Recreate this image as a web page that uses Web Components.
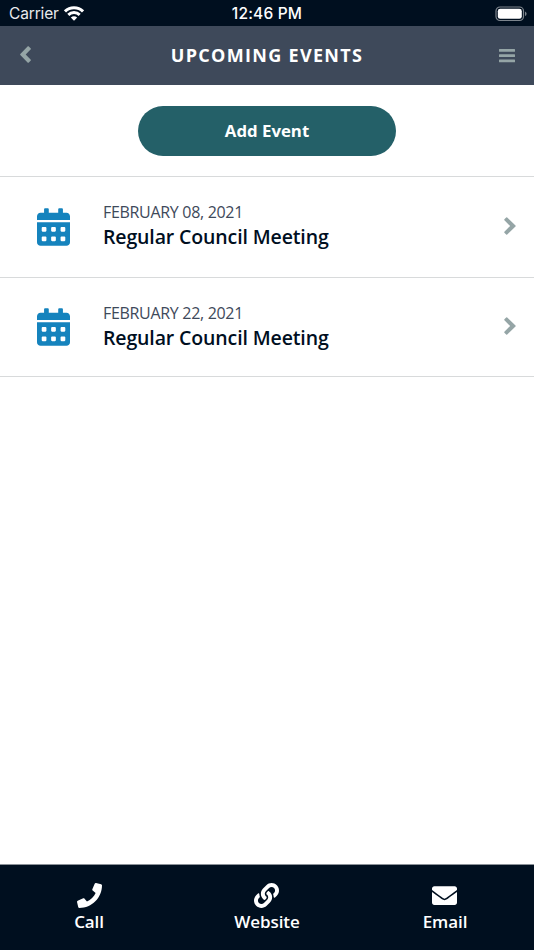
<!DOCTYPE html>
<html lang="en">
<head>
<meta charset="utf-8">
<title>Upcoming Events</title>
<style>
  body {
    margin: 0;
    background: #fff;
    font-family: "Open Sans", "Noto Sans", sans-serif;
    color: #000f1f;
  }
  event-row:last-of-type {
    --row-height: 98px;
    --text-drop: 2px;
  }
</style>
</head>
<body>
<events-app>
  <status-bar slot="top" carrier="Carrier">12:46 PM</status-bar>
  <nav-header slot="top">UPCOMING EVENTS</nav-header>
  <add-button>Add Event</add-button>
  <event-row date="FEBRUARY 08, 2021">Regular Council Meeting</event-row>
  <event-row date="FEBRUARY 22, 2021">Regular Council Meeting</event-row>
  <tab-item slot="tabs" icon="phone">Call</tab-item>
  <tab-item slot="tabs" icon="link">Website</tab-item>
  <tab-item slot="tabs" icon="envelope">Email</tab-item>
</events-app>

<script>
const ICONS = {
  phone: ["0 0 512 512", "M493.4 24.6l-104-24c-11.3-2.6-22.9 3.3-27.5 13.9l-48 112c-4.2 9.8-1.4 21.3 6.9 28l60.6 49.6c-36 76.7-98.9 140.5-177.2 177.2l-49.6-60.6c-6.8-8.3-18.2-11.1-28-6.9l-112 48C3.9 366.5-2 378.1.6 389.4l24 104C27.1 504.2 36.7 512 48 512c256.1 0 464-207.5 464-464 0-11.2-7.7-20.9-18.6-23.4z"],
  link: ["0 0 512 512", "M326.612 185.391c59.747 59.809 58.927 155.698.36 214.59-.11.12-.24.25-.36.37l-67.2 67.2c-59.27 59.27-155.699 59.262-214.96 0-59.27-59.26-59.27-155.7 0-214.96l37.106-37.106c9.84-9.84 26.786-3.3 27.294 10.606.648 17.722 3.826 35.527 9.69 52.721 1.986 5.822.567 12.262-3.783 16.612l-13.087 13.087c-28.026 28.026-28.905 73.66-1.155 101.96 28.024 28.579 74.086 28.749 102.325.51l67.2-67.19c28.191-28.191 28.073-73.757 0-101.83-3.701-3.694-7.429-6.564-10.341-8.569a16.037 16.037 0 0 1-6.947-12.606c-.396-10.567 3.348-21.456 11.698-29.806l21.054-21.055c5.521-5.521 14.182-6.199 20.584-1.731a152.482 152.482 0 0 1 20.522 17.197zM467.547 44.449c-59.261-59.262-155.69-59.27-214.96 0l-67.2 67.2c-.12.12-.25.25-.36.37-58.566 58.892-59.387 154.781.36 214.59a152.454 152.454 0 0 0 20.521 17.196c6.402 4.468 15.064 3.789 20.584-1.731l21.054-21.055c8.35-8.35 12.094-19.239 11.698-29.806a16.037 16.037 0 0 0-6.947-12.606c-2.912-2.005-6.64-4.875-10.341-8.569-28.073-28.073-28.191-73.639 0-101.83l67.2-67.19c28.239-28.239 74.3-28.069 102.325.51 27.75 28.3 26.872 73.934-1.155 101.96l-13.087 13.087c-4.35 4.35-5.769 10.79-3.783 16.612 5.864 17.194 9.042 34.999 9.69 52.721.509 13.906 17.454 20.446 27.294 10.606l37.106-37.106c59.271-59.259 59.271-155.699.001-214.959z"],
  envelope: ["0 0 512 512", "M502.3 190.8c3.9-3.1 9.7-.2 9.7 4.7V400c0 26.5-21.5 48-48 48H48c-26.5 0-48-21.5-48-48V195.6c0-5 5.7-7.8 9.7-4.7 22.4 17.4 52.1 39.5 154.1 113.6 21.1 15.4 56.7 47.8 92.2 47.6 35.7.3 72-32.8 92.3-47.6 102-74.1 131.6-96.3 154-113.7zM256 320c23.2.4 56.6-29.2 73.4-41.4 132.7-96.3 142.8-104.7 173.4-128.7 5.8-4.5 9.2-11.5 9.2-18.9v-19c0-26.5-21.5-48-48-48H48c-26.5 0-48 21.5-48 48v19c0 7.4 3.4 14.3 9.2 18.9 30.6 23.9 40.7 32.4 173.4 128.7 16.8 12.2 50.2 41.8 73.4 41.4z"],
  calendar: ["0 0 448 512", "M0 464c0 26.5 21.5 48 48 48h352c26.5 0 48-21.5 48-48V192H0v272z" +
    [[320, 268], [320, 396], [192, 268], [192, 396], [64, 268], [64, 396]].map(([x, y]) =>
      `M${x} ${y}c0-6.6 5.4-12 12-12h40c6.6 0 12 5.4 12 12v40c0 6.6-5.4 12-12 12h-40c-6.6 0-12-5.4-12-12v-40z`).join("") +
    "M400 64h-48V16c0-8.8-7.2-16-16-16h-32c-8.8 0-16 7.2-16 16v48H160V16c0-8.8-7.2-16-16-16h-32c-8.8 0-16 7.2-16 16v48H48C21.5 64 0 85.5 0 112v48h448v-48c0-26.5-21.5-48-48-48z"],
  back: ["0 0 11 17", "M7.8.3Q8.2 0 8.6.3L10.8 2.500Q11.1 2.900 10.8 3.300L5.700 8.5 10.8 13.700Q11.1 14.1 10.8 14.500L8.600 16.7Q8.2 17 7.8 16.7L.3 8.9Q0 8.5 .3 8.1z"],
  forward: ["0 0 12 18", "M3.2.4Q2.7 0 2.2.4L.4 2.2Q0 2.7.4 3.2L6.1 9 .4 14.8Q0 15.3.4 15.8L2.2 17.6Q2.7 18 3.2 17.6L11.5 9.5Q12 9 11.5 8.5z"],
  menu: ["0 0 16 14", "M.5 0h15q.5 0 .5.5v1.8q0 .5-.5.5H.5q-.5 0-.5-.5V.5Q0 0 .5 0zM.5 5.2h15q.5 0 .5.5v1.8q0 .5-.5.5H.5Q0 8 0 7.500V5.7q0-.5.5-.5zM.5 10.400h15q.5 0 .5.5v1.8q0 .5-.5.5H.5q-.5 0-.5-.5v-1.8q0-.5.5-.5z"]
};

class AppIcon extends HTMLElement {
  constructor() {
    super();
    this.attachShadow({ mode: "open" });
  }
  connectedCallback() {
    const [box, path] = ICONS[this.getAttribute("name")];
    this.shadowRoot.innerHTML = `
      <style>
        :host { display: block; flex: none; }
        svg { display: block; width: 100%; height: 100%; fill: currentColor; }
      </style>
      <svg viewBox="${box}"><path fill-rule="evenodd" d="${path}"/></svg>
    `;
  }
}

class EventsApp extends HTMLElement {
  constructor() {
    super();
    this.attachShadow({ mode: "open" });
    this.shadowRoot.innerHTML = `
      <style>
        :host { display: flex; flex-direction: column; height: 950px; }
        main { flex: 1; }
        footer {
          display: grid;
          grid-template-columns: repeat(3, 1fr);
          height: 85px;
          background: #000f1f;
          border-top: 1px solid #8b9198;
          box-sizing: content-box;
        }
      </style>
      <slot name="top"></slot>
      <main><slot></slot></main>
      <footer><slot name="tabs"></slot></footer>
    `;
  }
}

class StatusBar extends HTMLElement {
  constructor() {
    super();
    this.attachShadow({ mode: "open" });
  }
  connectedCallback() {
    this.shadowRoot.innerHTML = `
      <style>
        :host {
          display: grid;
          grid-template-columns: 1fr auto 1fr;
          align-items: center;
          height: 26px;
          box-sizing: border-box;
          padding: 1px 7px 0 9px;
          background: #000f1f;
          color: #fff;
          font: 15.5px/24px Inter, sans-serif;
        }
        .left { display: flex; align-items: center; gap: 5px; }
        .carrier { letter-spacing: -0.15px; color: #e9ebed; }
        .time { font-weight: 500; letter-spacing: 0.2px; margin-right: 2px; }
        .battery { justify-self: end; }
        svg { display: block; }
      </style>
      <div class="left">
        <span class="carrier">${this.getAttribute("carrier")}</span>
        <svg width="20" height="15" viewBox="0 0 20 15" fill="none" stroke="#fff" stroke-width="2.9">
          <path d="M1 5.400A12.800 12.800 0 0 1 19 5.400"/>
          <path d="M4.300 8.900A8.100 8.100 0 0 1 15.700 8.900"/>
          <path d="M10 14.800L6.800 11.600Q10 8.900 13.200 11.600z" fill="#fff" stroke="none"/>
        </svg>
      </div>
      <span class="time"><slot></slot></span>
      <svg class="battery" width="32" height="16" viewBox="0 0 32 16">
        <rect x="1" y="1" width="27.500" height="13.500" rx="4" fill="none" stroke="#7c848c" stroke-width="1.200"/>
        <rect x="2.800" y="2.800" width="24" height="10" rx="2.400" fill="#fff"/>
        <path d="M30 5.500q1.600.7 1.600 2.300t-1.600 2.300z" fill="#7c848c"/>
      </svg>
    `;
  }
}

class NavHeader extends HTMLElement {
  constructor() {
    super();
    this.attachShadow({ mode: "open" });
    this.shadowRoot.innerHTML = `
      <style>
        :host {
          display: grid;
          grid-template-columns: 1fr auto 1fr;
          align-items: center;
          height: 59px;
          box-sizing: border-box;
          padding: 0 19px 0 20px;
          background: #3e495a;
          color: #fff;
        }
        h1 { margin: 0 1px 0 0; font-size: 18px; line-height: 26px; font-weight: 700; letter-spacing: 1.3px; padding-bottom: 2px; }
        app-icon { color: #95a5a6; }
        .back { width: 11px; height: 17px; margin-bottom: 2px; }
        .menu { width: 16px; height: 14px; justify-self: end; }
      </style>
      <app-icon class="back" name="back"></app-icon>
      <h1><slot></slot></h1>
      <app-icon class="menu" name="menu"></app-icon>
    `;
  }
}

class AddButton extends HTMLElement {
  constructor() {
    super();
    this.attachShadow({ mode: "open" });
    this.shadowRoot.innerHTML = `
      <style>
        :host {
          display: flex;
          justify-content: center;
          height: 49.5px;
          padding: 21px 0 20.5px;
          border-bottom: 1px solid #d8dadb;
        }
        button {
          width: 258px;
          border: 0;
          border-radius: 25px;
          background: #246068;
          color: #fff;
          font: 700 16.8px/24px "Open Sans", sans-serif;
          padding: 1px 0 0;
        }
      </style>
      <button><slot></slot></button>
    `;
  }
}

class EventRow extends HTMLElement {
  constructor() {
    super();
    this.attachShadow({ mode: "open" });
  }
  connectedCallback() {
    this.shadowRoot.innerHTML = `
      <style>
        :host {
          display: flex;
          align-items: center;
          height: var(--row-height, 100px);
          padding: 0 18px 0 37px;
          border-bottom: 1px solid #d8dadb;
        }
        .calendar { width: 33px; height: 38px; color: #1583bd; }
        .text { flex: 1; margin-left: 33px; padding: var(--text-drop, 0) 0 2px; }
        .date { font-size: 16px; line-height: 22px; letter-spacing: -0.31px; color: #3e495a; margin-top: -1px; }
        .title { font-size: 19.5px; line-height: 28px; font-weight: 600; letter-spacing: -0.13px; }
        .arrow { width: 12px; height: 18px; margin-bottom: 3px; color: #95a5a6; }
      </style>
      <app-icon class="calendar" name="calendar"></app-icon>
      <div class="text">
        <div class="date">${this.getAttribute("date")}</div>
        <div class="title"><slot></slot></div>
      </div>
      <app-icon class="arrow" name="forward"></app-icon>
    `;
  }
}

class TabItem extends HTMLElement {
  constructor() {
    super();
    this.attachShadow({ mode: "open" });
  }
  connectedCallback() {
    this.shadowRoot.innerHTML = `
      <style>
        :host {
          display: flex;
          flex-direction: column;
          align-items: center;
          padding-top: 18px;
          color: #fff;
          font-size: 17px;
          line-height: 24px;
          font-weight: 600;
          letter-spacing: -0.1px;
        }
        :host([icon="phone"]) app-icon { margin-right: 0; }
        app-icon { width: 25px; height: 25px; margin: 0 1px 2px 0; }
      </style>
      <app-icon name="${this.getAttribute("icon")}"></app-icon>
      <span><slot></slot></span>
    `;
  }
}

customElements.define("app-icon", AppIcon);
customElements.define("events-app", EventsApp);
customElements.define("status-bar", StatusBar);
customElements.define("nav-header", NavHeader);
customElements.define("add-button", AddButton);
customElements.define("event-row", EventRow);
customElements.define("tab-item", TabItem);
</script>
</body>
</html>
